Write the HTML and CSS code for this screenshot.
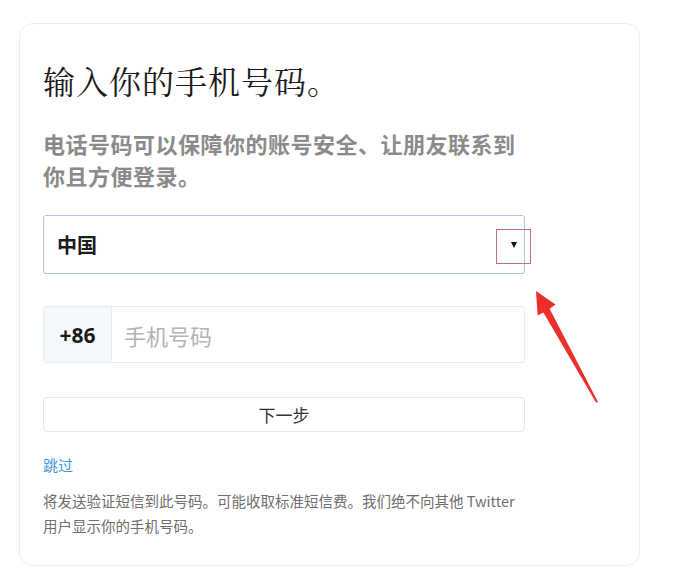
FILE: index.html
```html
<!DOCTYPE html>
<html lang="zh-CN">
<head>
<meta charset="utf-8">
<title>输入你的手机号码</title>
<link rel="stylesheet" href="styles.css">
</head>
<body>
<div class="page">
  <div class="card">
    <h1 class="title">输入你的手机号码。</h1>
    <p class="subtitle">电话号码可以保障你的账号安全、让朋友联系到<br>你且方便登录。</p>
    <div class="select">
      <span class="select-text">中国</span>
      <span class="caret-box"><span class="caret"></span></span>
    </div>
    <div class="phone">
      <span class="prefix">+86</span>
      <span class="placeholder">手机号码</span>
    </div>
    <div class="next">下一步</div>
    <a class="skip" href="#">跳过</a>
    <p class="note">将发送验证短信到此号码。可能收取标准短信费。我们绝不向其他 Twitter<br>用户显示你的手机号码。</p>
  </div>
  <svg class="arrow" width="676" height="582" viewBox="0 0 676 582">
    <polygon points="536,291 555.5,304.5 549.6,308.8 598,402 596,402.6 543.4,312.4 537.6,315.4" fill="#ec2f2a"/>
  </svg>
</div>
</body>
</html>
```

FILE: styles.css
```css
html, body {
  margin: 0;
  padding: 0;
  background: #ffffff;
}

.page {
  position: relative;
  width: 676px;
  height: 582px;
  padding-top: 23px;
  box-sizing: border-box;
  font-family: "Noto Sans CJK SC", "Noto Sans", sans-serif;
}

.card {
  margin-left: 19px;
  width: 621px;
  height: 543px;
  box-sizing: border-box;
  border: 1px solid #ededed;
  border-radius: 14px;
  padding: 36px 0 0 23px;
  display: flex;
  flex-direction: column;
  align-items: flex-start;
}

.title {
  margin: 0;
  font-family: "Noto Serif CJK SC", "Liberation Serif", serif;
  font-size: 32px;
  line-height: 40px;
  font-weight: 400;
  letter-spacing: 1px;
  color: #1a1a1a;
}

.subtitle {
  margin: 27px 0 0;
  font-size: 22px;
  line-height: 32px;
  font-weight: 700;
  letter-spacing: 0.5px;
  color: #8a8a8a;
}

.select {
  margin-top: 24px;
  width: 482px;
  height: 59px;
  box-sizing: border-box;
  border: 1.5px solid #a9c8e6;
  border-radius: 3px;
  display: flex;
  align-items: center;
  justify-content: space-between;
  padding-left: 13px;
  position: relative;
}

.select-text {
  font-size: 20px;
  font-weight: 700;
  color: #1c1c1c;
}

.caret-box {
  width: 35px;
  height: 35px;
  box-sizing: border-box;
  border: 1.5px solid #c2707c;
  margin-right: -7px;
  margin-top: 3px;
  display: flex;
  align-items: center;
  justify-content: center;
}

.caret {
  width: 0;
  height: 0;
  border-left: 3.5px solid transparent;
  border-right: 3.5px solid transparent;
  border-top: 6px solid #111;
  margin-top: -2px;
}

.phone {
  margin-top: 32px;
  width: 482px;
  height: 57px;
  box-sizing: border-box;
  border: 1px solid #e8ecef;
  border-radius: 3px;
  display: flex;
  align-items: stretch;
}

.prefix {
  width: 67px;
  background: #f5f8fa;
  border-right: 1px solid #e8ecef;
  display: flex;
  align-items: center;
  justify-content: center;
  font-family: "Open Sans", "Noto Sans", sans-serif;
  font-size: 21px;
  font-weight: 700;
  color: #1a1a1a;
}

.placeholder {
  display: flex;
  align-items: center;
  padding-left: 12px;
  font-size: 22px;
  color: #b3b3b3;
}

.next {
  margin-top: 34px;
  width: 482px;
  height: 35px;
  box-sizing: border-box;
  border: 1px solid #e6e6e6;
  border-radius: 4px;
  display: flex;
  align-items: center;
  justify-content: center;
  font-size: 17px;
  color: #333;
}

.skip {
  margin-top: 23px;
  font-size: 15px;
  line-height: 20px;
  color: #3d9be0;
  text-decoration: none;
}

.note {
  margin: 13px 0 0;
  font-size: 14.5px;
  line-height: 25px;
  color: #6e6e6e;
}

.arrow {
  position: absolute;
  left: 0;
  top: 0;
  pointer-events: none;
}
```
